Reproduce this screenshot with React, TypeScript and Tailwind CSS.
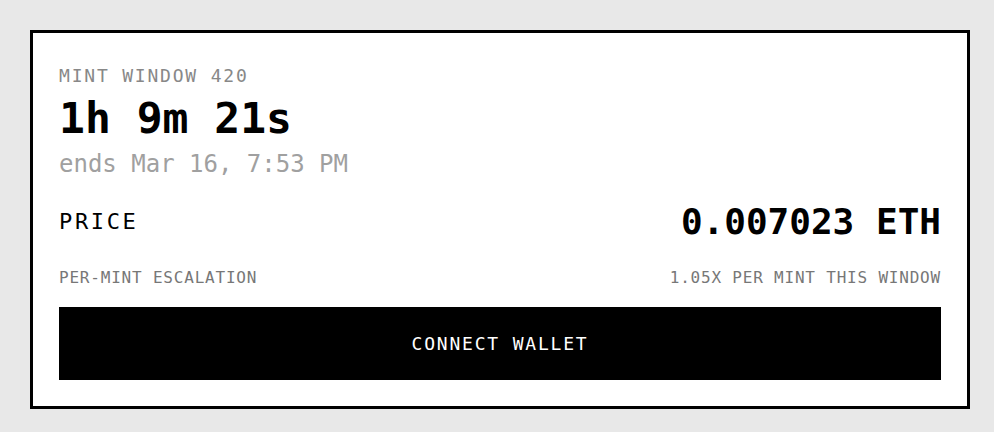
import React from 'react';

const mono = "font-['DejaVu_Sans_Mono','Liberation_Mono',monospace]";

const MintCard: React.FC = () => {
    return (
        <div className="w-[940px] border-[3px] border-black bg-white p-[26px] flex flex-col">
            <div className="mt-[8px] text-[18px] leading-none tracking-[0.1em] text-[#888888]">MINT WINDOW 420</div>
            <div className="mt-[12px] text-[43px] leading-none font-bold text-black">1h 9m 21s</div>
            <div className="mt-[12px] text-[24px] leading-none text-[#a0a0a0]">ends Mar 16, 7:53 PM</div>

            <div className="mt-[28px] flex items-center justify-between">
                <span className="text-[22px] leading-none tracking-[0.12em] text-black">PRICE</span>
                <span className="text-[36px] leading-none font-bold text-black">0.007023 ETH</span>
            </div>

            <div className="mt-[30px] flex items-center justify-between text-[16px] leading-none tracking-[0.05em] text-[#777777]">
                <span>PER-MINT ESCALATION</span>
                <span>1.05X PER MINT THIS WINDOW</span>
            </div>

            <button className="mt-[21px] h-[73px] w-full bg-black text-white text-[18px] leading-none tracking-[0.1em] flex items-center justify-center">
                CONNECT WALLET
            </button>
        </div>
    );
};

export default function App() {
    return (
        <div className={`h-[432px] w-full overflow-hidden bg-[#e8e8e8] pt-[30px] pl-[30px] ${mono}`}>
            <MintCard />
        </div>
    );
}
